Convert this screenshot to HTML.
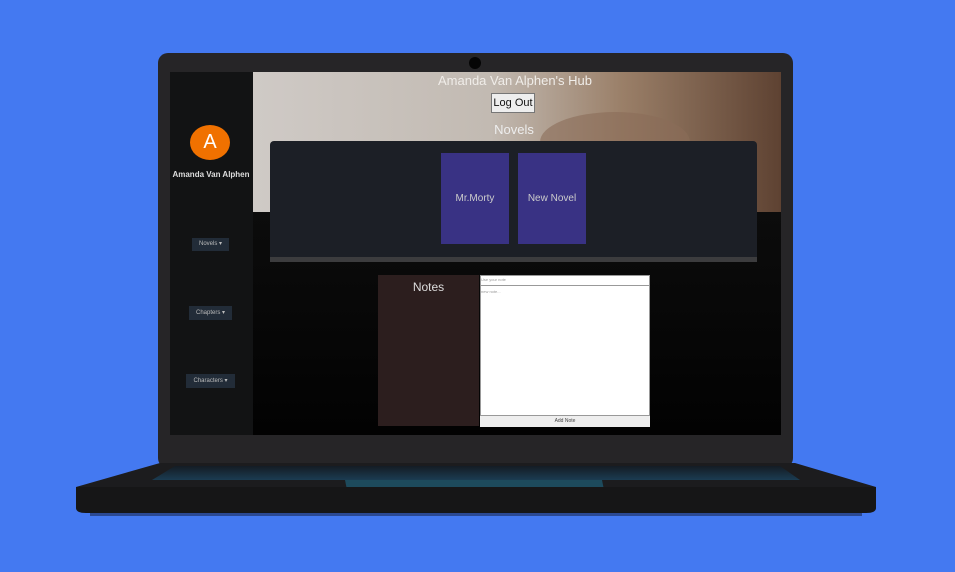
<!DOCTYPE html>
<html><head><style>
body{margin:0;width:955px;height:572px;background:#4479f1;position:relative;overflow:hidden;font-family:"Liberation Sans",sans-serif}
.a{position:absolute;white-space:nowrap}
</style></head><body>
<svg class="a" style="left:0;top:0" width="955" height="572">
<defs>
<linearGradient id="kb" x1="0" y1="0" x2="0" y2="1"><stop offset="0" stop-color="#141c24"/><stop offset="1" stop-color="#1b3c52"/></linearGradient>
</defs>
<rect x="158" y="53" width="635" height="415" rx="10" fill="#262527"/>
<circle cx="475" cy="63" r="6" fill="#050505"/>
<polygon points="160,463 795,463 876,487 76,487" fill="#1c1c1e"/>
<polygon points="175,466 780,466 800,480 152,480" fill="url(#kb)"/>
<polygon points="345,480 602,480 604,490 347,490" fill="#1d4a5c"/>
<path d="M76,487 H876 V508 Q876,513 866,513 H86 Q76,513 76,508 Z" fill="#161617"/>
<rect x="90" y="513" width="772" height="3" fill="#1a2a55" opacity=".6"/>
</svg>
<div class="a" style="left:170px;top:72px;width:611px;height:363px;background:linear-gradient(#121212,#020202)"></div>
<div class="a" style="left:170px;top:72px;width:83px;height:363px;background:#121314"></div>
<div class="a" style="left:253px;top:72px;width:528px;height:140px;background:linear-gradient(90deg,#cfcac6 0%,#c2bab2 45%,#9a7f68 70%,#5e4232 100%)"></div>
<div class="a" style="left:540px;top:112px;width:150px;height:60px;border-radius:50%;background:#8a6c58;opacity:.6"></div>
<div class="a" style="left:300px;top:73px;width:430px;text-align:center;color:#f0ede9;font-size:13px">Amanda Van Alphen's Hub</div>
<div class="a" style="left:491px;top:93px;width:42px;height:18px;background:#eee;border:1px solid #777;font-size:11px;text-align:center;line-height:18px;color:#111">Log Out</div>
<div class="a" style="left:480px;top:122px;width:68px;text-align:center;color:#eee;font-size:13px">Novels</div>
<div class="a" style="left:190px;top:125px;width:40px;height:35px;border-radius:50%;background:#f07100;color:#fff;font-size:20px;text-align:center;line-height:35px">A</div>
<div class="a" style="left:168px;top:170px;width:86px;text-align:center;color:#ddd;font-size:8px;font-weight:bold">Amanda Van Alphen</div>
<div class="a" style="left:192px;top:238px;width:37px;height:13px;background:#222c38;color:#bbb;font-size:6px;text-align:center;line-height:13px">Novels ▾</div>
<div class="a" style="left:189px;top:306px;width:43px;height:14px;background:#222c38;color:#bbb;font-size:6px;text-align:center;line-height:14px">Chapters ▾</div>
<div class="a" style="left:186px;top:374px;width:49px;height:14px;background:#222c38;color:#bbb;font-size:6px;text-align:center;line-height:14px">Characters ▾</div>
<div class="a" style="left:270px;top:141px;width:487px;height:121px;background:#1c1f26;border-radius:4px 4px 0 0"></div>
<div class="a" style="left:270px;top:257px;width:487px;height:5px;background:#3c3c3e"></div>
<div class="a" style="left:441px;top:153px;width:68px;height:91px;background:#393284;color:#ccc;font-size:10px;text-align:center;line-height:91px">Mr.Morty</div>
<div class="a" style="left:518px;top:153px;width:68px;height:91px;background:#393284;color:#ccc;font-size:10px;text-align:center;line-height:91px">New Novel</div>
<div class="a" style="left:378px;top:275px;width:101px;height:151px;background:#2c1e1e;color:#ddd;font-size:12px;text-align:center;padding-top:5px;box-sizing:border-box">Notes</div>
<div class="a" style="left:480px;top:275px;width:170px;height:151px;background:#fff;border:1px solid #999;box-sizing:border-box"></div>
<div class="a" style="left:481px;top:277px;font-size:4px;color:#999">Use your note</div>
<div class="a" style="left:480px;top:285px;width:170px;height:1px;background:#999"></div>
<div class="a" style="left:481px;top:289px;font-size:4px;color:#999">new note...</div>
<div class="a" style="left:480px;top:415px;width:170px;height:11px;background:#eee;border-top:1px solid #999;font-size:5px;text-align:center;line-height:11px;color:#444">Add Note</div>
</body></html>
